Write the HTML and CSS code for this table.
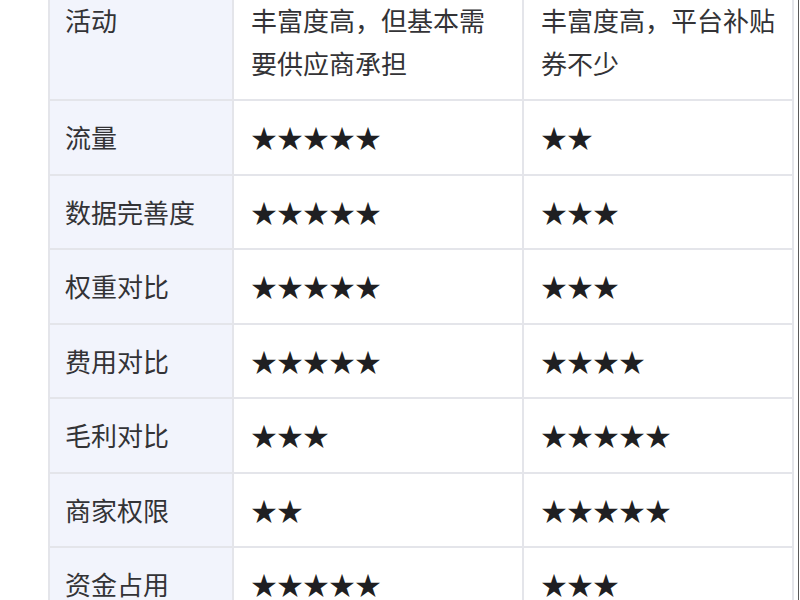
FILE: index.html
```html
<!DOCTYPE html>
<html lang="zh">
<head>
<meta charset="utf-8">
<link rel="stylesheet" href="styles.css">
</head>
<body>
<div class="page">
  <table class="cmp">
    <colgroup>
      <col class="c1">
      <col class="c2">
      <col class="c3">
    </colgroup>
    <tbody>
      <tr><th>活动</th><td>丰富度高，但基本需要供应商承担</td><td>丰富度高，平台补贴券不少</td></tr>
      <tr><th>流量</th><td class="stars">★★★★★</td><td class="stars">★★</td></tr>
      <tr><th>数据完善度</th><td class="stars">★★★★★</td><td class="stars">★★★</td></tr>
      <tr><th>权重对比</th><td class="stars">★★★★★</td><td class="stars">★★★</td></tr>
      <tr><th>费用对比</th><td class="stars">★★★★★</td><td class="stars">★★★★</td></tr>
      <tr><th>毛利对比</th><td class="stars">★★★</td><td class="stars">★★★★★</td></tr>
      <tr><th>商家权限</th><td class="stars">★★</td><td class="stars">★★★★★</td></tr>
      <tr><th>资金占用</th><td class="stars">★★★★★</td><td class="stars">★★★</td></tr>
    </tbody>
  </table>
</div>
</body>
</html>
```

FILE: styles.css
```css
html, body {
  margin: 0;
  padding: 0;
  background: #ffffff;
}
.page {
  width: 799px;
  height: 600px;
  overflow: hidden;
  border-right: 1px solid #5a5a5a;
  padding-left: 48px;
  box-sizing: border-box;
  background: #ffffff;
}
.cmp {
  border-collapse: collapse;
  table-layout: fixed;
  width: 744px;
  margin-top: -18px;
  font-family: "Noto Sans CJK SC", "Noto Sans", sans-serif;
  font-size: 26px;
  line-height: 42.5px;
  color: #333336;
}
.c1 { width: 184px; }
.c2 { width: 290px; }
.c3 { width: 270px; }
.cmp th,
.cmp td {
  border: 2px solid #e4e5ea;
  padding: 15px 16px 15px 17px;
  text-align: left;
  vertical-align: top;
  font-weight: normal;
}
.cmp th {
  background: #f2f4fc;
  padding-left: 15px;
}
.stars {
  color: #1f1f22;
}
```
